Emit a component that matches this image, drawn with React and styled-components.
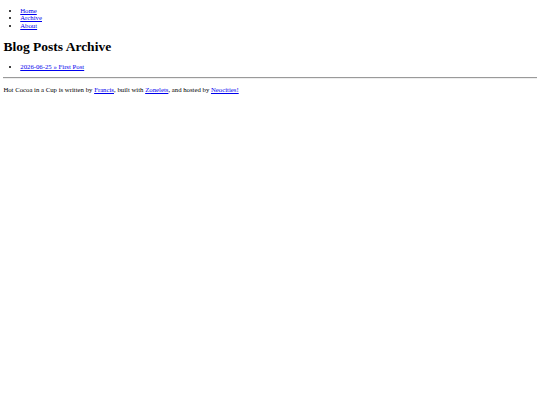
import React from "react";
import styled, { createGlobalStyle } from "styled-components";

// The reference is a plain 1280px-wide page shown at 540px, so the whole
// page is drawn at natural size and scaled down with zoom.
const GlobalStyle = createGlobalStyle`
  html, body {
    margin: 0;
    padding: 0;
    background: #ffffff;
  }
`;

// body margin collapses with the first list's margin in the original,
// so only the sides get padding here
const Page = styled.div`
  zoom: 0.421875;
  padding: 0 8px;
  font-family: "Liberation Serif", "Times New Roman", serif;
  font-size: 16px;
  line-height: 1.125;
  color: #000000;
  display: flow-root;
`;

const List = styled.ul`
  margin: 16px 0;
  padding-left: 40px;
  list-style: disc;
`;

const Link = styled.a`
  color: #0000ee;
  text-decoration: underline;
`;

const Title = styled.h1`
  font-size: 32px;
  font-weight: bold;
  margin: 21.44px 0;
`;

const Rule = styled.hr`
  margin: 8px 0;
  border: none;
  border-top: 1px solid #9a9a9a;
  border-bottom: 1px solid #eeeeee;
`;

const Footer = styled.p`
  margin: 16px 0;
`;

const navLinks = ["Home", "Archive", "About"];

export default function App() {
  return (
    <>
      <GlobalStyle />
      <Page>
        <List>
          {navLinks.map((label) => (
            <li key={label}>
              <Link href="#">{label}</Link>
            </li>
          ))}
        </List>
        <Title>Blog Posts Archive</Title>
        <List>
          <li>
            <Link href="#">2026-06-25 » First Post</Link>
          </li>
        </List>
        <Rule />
        <Footer>
          Hot Cocoa in a Cup is written by <Link href="#">Francis</Link>, built
          with <Link href="#">Zonelets</Link>, and hosted by{" "}
          <Link href="#">Neocities!</Link>
        </Footer>
      </Page>
    </>
  );
}
